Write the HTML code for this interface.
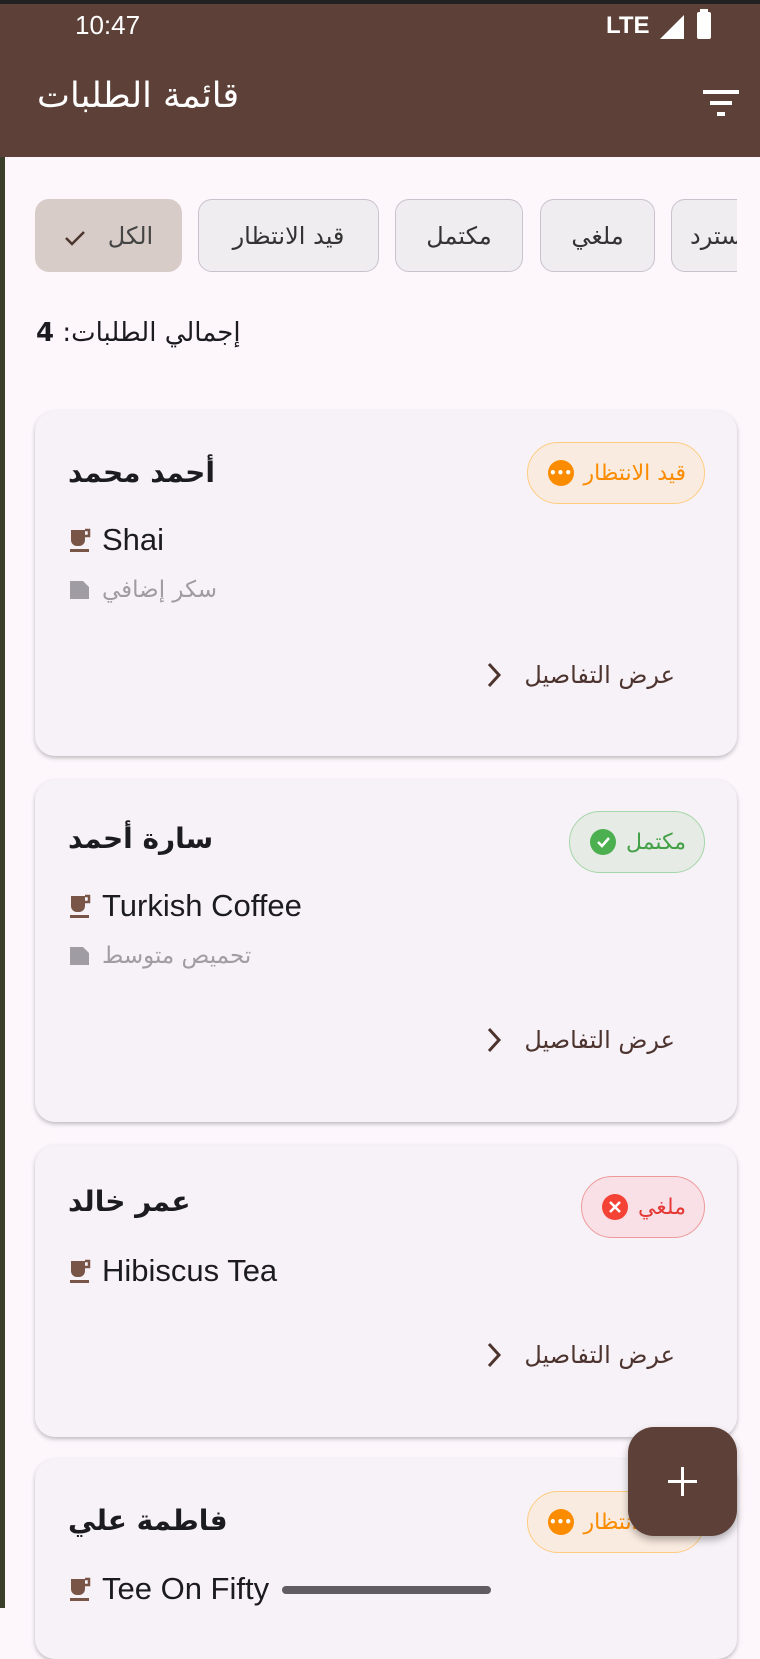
<!DOCTYPE html>
<html><head><meta charset="utf-8"><style>
*{box-sizing:border-box;margin:0;padding:0}
body{width:760px;height:1608px;overflow:hidden;background:#FDF7FC;font-family:"Liberation Sans","Noto Sans CJK SC",sans-serif;position:relative}
.abs{position:absolute}
.ar{font-family:"DejaVu Sans","Liberation Sans",sans-serif;direction:rtl;white-space:nowrap}
.hdr{left:0;top:0;width:760px;height:157px;background:#5D4037}
.chip{top:199px;height:73px;border:1.5px solid #C9C2CC;border-radius:14px;background:#EFEDEF;display:flex;align-items:center;justify-content:center;font-size:24px;color:#333}
.card{left:35px;width:702px;background:#F6F2F8;border-radius:20px;box-shadow:0 2px 4px rgba(0,0,0,.25)}
.name{font-weight:bold;font-size:28px;color:#1C1B1F;left:33px}
.badge{right:32px;height:62px;border-radius:31px;display:flex;align-items:center;padding:0 18px 0 20px;gap:10px;font-size:22px}
.ic{width:26px;height:26px;border-radius:50%;display:flex;align-items:center;justify-content:center}
.drink{left:33px;font-size:31px;color:#1C1B1F;display:flex;align-items:center;gap:10px}
.note{left:33px;font-size:23px;color:#A09CA3;display:flex;align-items:center;gap:12px}
.det{right:62px;font-size:24px;color:#4E342E;display:flex;align-items:center;gap:22px}
</style></head><body>
<div class="abs" style="left:0;top:0;width:5px;height:1608px;background:#3a3f2a"></div>
<div class="abs hdr"></div>
<div class="abs" style="left:0;top:0;width:760px;height:4px;background:#222"></div>
<div class="abs" style="left:75px;top:10px;font-size:26px;color:#fff">10:47</div>
<div class="abs" style="left:606px;top:12px;font-size:24px;color:#fff;font-weight:bold">LTE</div>
<svg class="abs" style="left:660px;top:15px" width="24" height="24"><path d="M0 24L24 0V24Z" fill="#fff"/></svg>
<div class="abs" style="left:697px;top:12px;width:14px;height:27px;background:#fff;border-radius:2px"></div>
<div class="abs" style="left:700px;top:9px;width:8px;height:4px;background:#fff"></div>
<div class="abs ar" style="left:37px;top:76px;font-size:35px;color:#fff">قائمة الطلبات</div>
<svg class="abs" style="left:703px;top:90px" width="36" height="26"><rect x="0" y="0" width="36" height="4" fill="#fff"/><rect x="7" y="11" width="22" height="4" fill="#fff"/><rect x="14" y="22" width="8" height="4" fill="#fff"/></svg>

<div class="abs chip ar" style="left:35px;width:147px;background:#D7CCC8;border-color:#D7CCC8;color:#444;gap:22px">الكل <svg width="22" height="18" style="margin-top:4px"><path d="M2 9l6 6L20 3" fill="none" stroke="#4E342E" stroke-width="2.5"/></svg></div>
<div class="abs chip ar" style="left:198px;width:181px">قيد الانتظار</div>
<div class="abs chip ar" style="left:395px;width:128px">مكتمل</div>
<div class="abs chip ar" style="left:540px;width:115px">ملغي</div>
<div class="abs" style="left:671px;top:199px;width:66px;height:73px;overflow:hidden"><div class="chip ar" style="position:absolute;left:0;top:0;width:140px;justify-content:flex-start;padding-left:18px;direction:ltr"><span class="ar">مسترد</span></div></div>

<div class="abs ar" style="left:36px;top:318px;font-size:26px;color:#1C1B1F;width:240px;text-align:left;direction:ltr">إجمالي الطلبات: <b>4</b></div>

<!-- card1 -->
<div class="abs card" style="top:411px;height:345px">
<div class="abs name ar" style="top:45px">أحمد محمد</div>
<div class="abs badge ar" style="top:31px;background:#FAEBE0;border:1.5px solid #FFCC80;color:#FB8C00">قيد الانتظار<div class="ic" style="background:#FB8C00;color:#fff;font-size:12px;font-weight:bold">•••</div></div>
<div class="abs drink" style="top:111px"><svg width="24" height="26"><path d="M3 3h14v10a6 6 0 0 1-6 6h-2a6 6 0 0 1-6-6z" fill="#795548"/><path d="M17 3h4v6h-4" fill="none" stroke="#795548" stroke-width="2.5"/><rect x="2" y="22" width="19" height="3" fill="#795548"/></svg>Shai</div>
<div class="abs note" style="top:166px"><svg width="22" height="22"><path d="M2 2h13l6 6v12H2z" fill="#A09CA3"/></svg><span class="ar">سكر إضافي</span></div>
<div class="abs det" style="top:250px"><svg width="16" height="26"><path d="M3 2l10 11-10 11" fill="none" stroke="#4E342E" stroke-width="3"/></svg><span class="ar">عرض التفاصيل</span></div>
</div>

<!-- card2 -->
<div class="abs card" style="top:780px;height:342px">
<div class="abs name ar" style="top:42px">سارة أحمد</div>
<div class="abs badge ar" style="top:31px;background:#E6EBE6;border:1.5px solid #A5D6A7;color:#43A047">مكتمل<div class="ic" style="background:#4CAF50"><svg width="16" height="16"><path d="M3 8l4 4 7-8" fill="none" stroke="#fff" stroke-width="2.5"/></svg></div></div>
<div class="abs drink" style="top:108px"><svg width="24" height="26"><path d="M3 3h14v10a6 6 0 0 1-6 6h-2a6 6 0 0 1-6-6z" fill="#795548"/><path d="M17 3h4v6h-4" fill="none" stroke="#795548" stroke-width="2.5"/><rect x="2" y="22" width="19" height="3" fill="#795548"/></svg>Turkish Coffee</div>
<div class="abs note" style="top:163px"><svg width="22" height="22"><path d="M2 2h13l6 6v12H2z" fill="#A09CA3"/></svg><span class="ar">تحميص متوسط</span></div>
<div class="abs det" style="top:246px"><svg width="16" height="26"><path d="M3 2l10 11-10 11" fill="none" stroke="#4E342E" stroke-width="3"/></svg><span class="ar">عرض التفاصيل</span></div>
</div>

<!-- card3 -->
<div class="abs card" style="top:1145px;height:292px">
<div class="abs name ar" style="top:40px">عمر خالد</div>
<div class="abs badge ar" style="top:31px;background:#F8E0E6;border:1.5px solid #EF9A9A;color:#E53935">ملغي<div class="ic" style="background:#F44336"><svg width="14" height="14"><path d="M2 2l10 10M12 2L2 12" stroke="#fff" stroke-width="2.5"/></svg></div></div>
<div class="abs drink" style="top:108px"><svg width="24" height="26"><path d="M3 3h14v10a6 6 0 0 1-6 6h-2a6 6 0 0 1-6-6z" fill="#795548"/><path d="M17 3h4v6h-4" fill="none" stroke="#795548" stroke-width="2.5"/><rect x="2" y="22" width="19" height="3" fill="#795548"/></svg>Hibiscus Tea</div>
<div class="abs det" style="top:196px"><svg width="16" height="26"><path d="M3 2l10 11-10 11" fill="none" stroke="#4E342E" stroke-width="3"/></svg><span class="ar">عرض التفاصيل</span></div>
</div>

<!-- card4 -->
<div class="abs card" style="top:1459px;height:200px">
<div class="abs name ar" style="top:45px">فاطمة علي</div>
<div class="abs badge ar" style="top:32px;background:#FAEBE0;border:1.5px solid #FFCC80;color:#FB8C00">قيد الانتظار<div class="ic" style="background:#FB8C00;color:#fff;font-size:12px;font-weight:bold">•••</div></div>
<div class="abs drink" style="top:112px"><svg width="24" height="26"><path d="M3 3h14v10a6 6 0 0 1-6 6h-2a6 6 0 0 1-6-6z" fill="#795548"/><path d="M17 3h4v6h-4" fill="none" stroke="#795548" stroke-width="2.5"/><rect x="2" y="22" width="19" height="3" fill="#795548"/></svg>Tee On Fifty</div>
</div>

<div class="abs" style="left:628px;top:1427px;width:109px;height:109px;border-radius:26px;background:#5D4037;box-shadow:0 4px 8px rgba(0,0,0,.3)"></div>
<svg class="abs" style="left:668px;top:1467px" width="29" height="29"><path d="M14.5 0v29M0 14.5h29" stroke="#fff" stroke-width="3"/></svg>
<div class="abs" style="left:282px;top:1586px;width:209px;height:8px;border-radius:4px;background:#5f5d62"></div>
</body></html>
